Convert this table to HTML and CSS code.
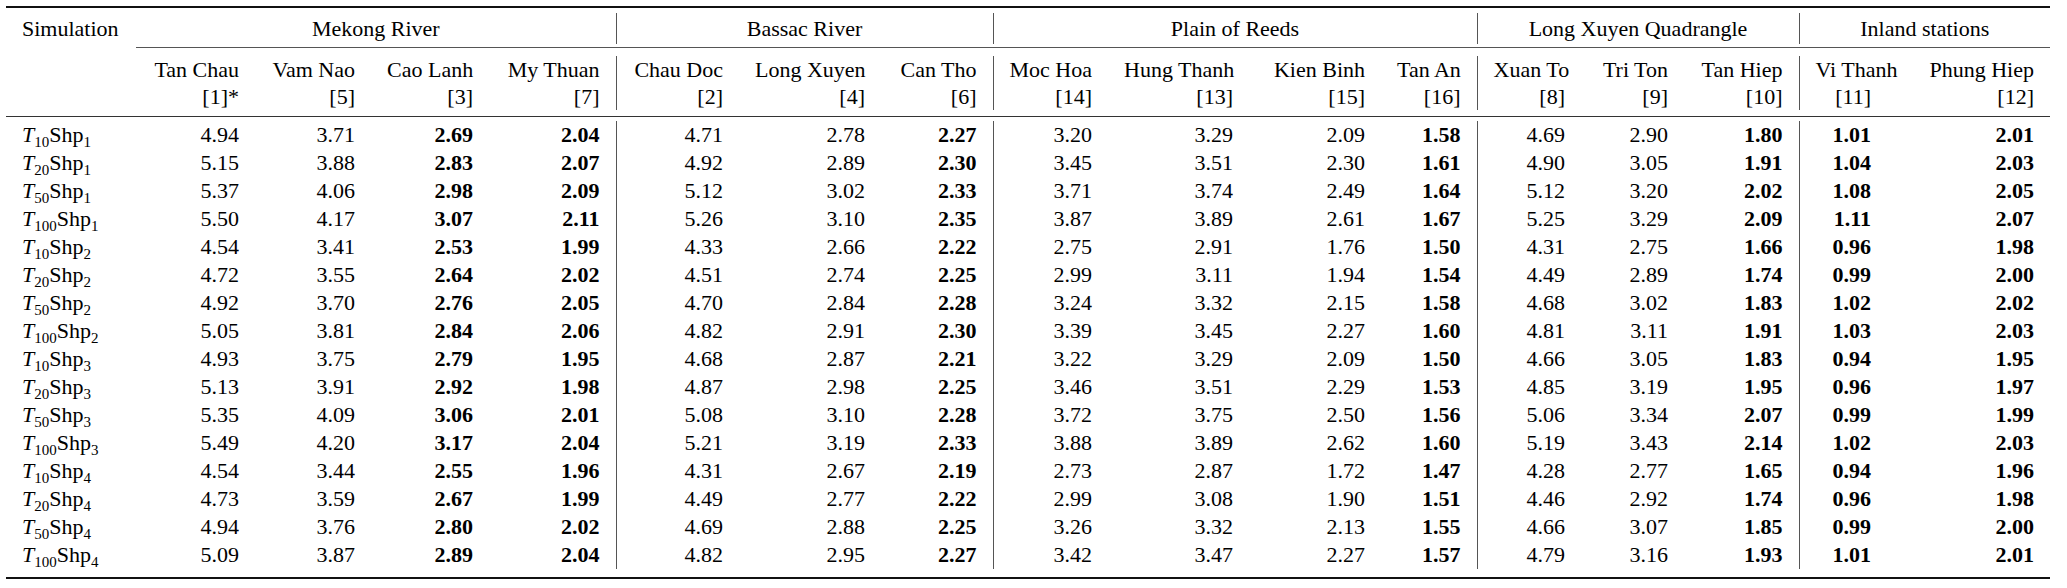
FILE: index.html
```html
<!DOCTYPE html>
<html lang="en">
<head>
<meta charset="utf-8">
<title>Simulation table</title>
<link rel="stylesheet" href="styles.css">
</head>
<body>
<table class="tbl">
  <colgroup>
    <col class="c-sim"><col class="c1"><col class="c2"><col class="c3"><col class="c4">
    <col class="c5"><col class="c6"><col class="c7">
    <col class="c8"><col class="c9"><col class="c10"><col class="c11">
    <col class="c12"><col class="c13"><col class="c14">
    <col class="c15"><col class="c16">
  </colgroup>
  <thead>
    <tr class="rule rule-top"><td colspan="17"></td></tr>
    <tr class="sp sp-a"><td colspan="17"></td></tr>
    <tr class="grp">
      <td class="sim-h">Simulation</td>
      <td colspan="4">Mekong River</td>
      <td colspan="3" class="s">Bassac River</td>
      <td colspan="4" class="s">Plain of Reeds</td>
      <td colspan="3" class="s">Long Xuyen Quadrangle</td>
      <td colspan="2" class="s">Inland stations</td>
    </tr>
    <tr class="sp sp-b"><td colspan="17"></td></tr>
    <tr class="cmid"><td></td><td colspan="16" class="line"></td></tr>
    <tr class="sp sp-c"><td colspan="17"></td></tr>
    <tr class="st">
      <td></td>
      <td>Tan Chau</td><td>Vam Nao</td><td>Cao Lanh</td><td>My Thuan</td>
      <td>Chau Doc</td><td>Long Xuyen</td><td>Can Tho</td>
      <td>Moc Hoa</td><td>Hung Thanh</td><td>Kien Binh</td><td>Tan An</td>
      <td>Xuan To</td><td>Tri Ton</td><td>Tan Hiep</td>
      <td>Vi Thanh</td><td>Phung Hiep</td>
    </tr>
    <tr class="st">
      <td></td>
      <td>[1]*</td><td>[5]</td><td>[3]</td><td>[7]</td>
      <td>[2]</td><td>[4]</td><td>[6]</td>
      <td>[14]</td><td>[13]</td><td>[15]</td><td>[16]</td>
      <td>[8]</td><td>[9]</td><td>[10]</td>
      <td>[11]</td><td>[12]</td>
    </tr>
    <tr class="sp sp-d"><td colspan="17"></td></tr>
    <tr class="rule rule-mid"><td colspan="17"></td></tr>
    <tr class="sp sp-e"><td colspan="17"></td></tr>
  </thead>
  <tbody>
    <tr><td><i>T</i><sub>10</sub>Shp<sub>1</sub></td><td>4.94</td><td>3.71</td><td>2.69</td><td>2.04</td><td>4.71</td><td>2.78</td><td>2.27</td><td>3.20</td><td>3.29</td><td>2.09</td><td>1.58</td><td>4.69</td><td>2.90</td><td>1.80</td><td>1.01</td><td>2.01</td></tr>
    <tr><td><i>T</i><sub>20</sub>Shp<sub>1</sub></td><td>5.15</td><td>3.88</td><td>2.83</td><td>2.07</td><td>4.92</td><td>2.89</td><td>2.30</td><td>3.45</td><td>3.51</td><td>2.30</td><td>1.61</td><td>4.90</td><td>3.05</td><td>1.91</td><td>1.04</td><td>2.03</td></tr>
    <tr><td><i>T</i><sub>50</sub>Shp<sub>1</sub></td><td>5.37</td><td>4.06</td><td>2.98</td><td>2.09</td><td>5.12</td><td>3.02</td><td>2.33</td><td>3.71</td><td>3.74</td><td>2.49</td><td>1.64</td><td>5.12</td><td>3.20</td><td>2.02</td><td>1.08</td><td>2.05</td></tr>
    <tr><td><i>T</i><sub>100</sub>Shp<sub>1</sub></td><td>5.50</td><td>4.17</td><td>3.07</td><td>2.11</td><td>5.26</td><td>3.10</td><td>2.35</td><td>3.87</td><td>3.89</td><td>2.61</td><td>1.67</td><td>5.25</td><td>3.29</td><td>2.09</td><td>1.11</td><td>2.07</td></tr>
    <tr><td><i>T</i><sub>10</sub>Shp<sub>2</sub></td><td>4.54</td><td>3.41</td><td>2.53</td><td>1.99</td><td>4.33</td><td>2.66</td><td>2.22</td><td>2.75</td><td>2.91</td><td>1.76</td><td>1.50</td><td>4.31</td><td>2.75</td><td>1.66</td><td>0.96</td><td>1.98</td></tr>
    <tr><td><i>T</i><sub>20</sub>Shp<sub>2</sub></td><td>4.72</td><td>3.55</td><td>2.64</td><td>2.02</td><td>4.51</td><td>2.74</td><td>2.25</td><td>2.99</td><td>3.11</td><td>1.94</td><td>1.54</td><td>4.49</td><td>2.89</td><td>1.74</td><td>0.99</td><td>2.00</td></tr>
    <tr><td><i>T</i><sub>50</sub>Shp<sub>2</sub></td><td>4.92</td><td>3.70</td><td>2.76</td><td>2.05</td><td>4.70</td><td>2.84</td><td>2.28</td><td>3.24</td><td>3.32</td><td>2.15</td><td>1.58</td><td>4.68</td><td>3.02</td><td>1.83</td><td>1.02</td><td>2.02</td></tr>
    <tr><td><i>T</i><sub>100</sub>Shp<sub>2</sub></td><td>5.05</td><td>3.81</td><td>2.84</td><td>2.06</td><td>4.82</td><td>2.91</td><td>2.30</td><td>3.39</td><td>3.45</td><td>2.27</td><td>1.60</td><td>4.81</td><td>3.11</td><td>1.91</td><td>1.03</td><td>2.03</td></tr>
    <tr><td><i>T</i><sub>10</sub>Shp<sub>3</sub></td><td>4.93</td><td>3.75</td><td>2.79</td><td>1.95</td><td>4.68</td><td>2.87</td><td>2.21</td><td>3.22</td><td>3.29</td><td>2.09</td><td>1.50</td><td>4.66</td><td>3.05</td><td>1.83</td><td>0.94</td><td>1.95</td></tr>
    <tr><td><i>T</i><sub>20</sub>Shp<sub>3</sub></td><td>5.13</td><td>3.91</td><td>2.92</td><td>1.98</td><td>4.87</td><td>2.98</td><td>2.25</td><td>3.46</td><td>3.51</td><td>2.29</td><td>1.53</td><td>4.85</td><td>3.19</td><td>1.95</td><td>0.96</td><td>1.97</td></tr>
    <tr><td><i>T</i><sub>50</sub>Shp<sub>3</sub></td><td>5.35</td><td>4.09</td><td>3.06</td><td>2.01</td><td>5.08</td><td>3.10</td><td>2.28</td><td>3.72</td><td>3.75</td><td>2.50</td><td>1.56</td><td>5.06</td><td>3.34</td><td>2.07</td><td>0.99</td><td>1.99</td></tr>
    <tr><td><i>T</i><sub>100</sub>Shp<sub>3</sub></td><td>5.49</td><td>4.20</td><td>3.17</td><td>2.04</td><td>5.21</td><td>3.19</td><td>2.33</td><td>3.88</td><td>3.89</td><td>2.62</td><td>1.60</td><td>5.19</td><td>3.43</td><td>2.14</td><td>1.02</td><td>2.03</td></tr>
    <tr><td><i>T</i><sub>10</sub>Shp<sub>4</sub></td><td>4.54</td><td>3.44</td><td>2.55</td><td>1.96</td><td>4.31</td><td>2.67</td><td>2.19</td><td>2.73</td><td>2.87</td><td>1.72</td><td>1.47</td><td>4.28</td><td>2.77</td><td>1.65</td><td>0.94</td><td>1.96</td></tr>
    <tr><td><i>T</i><sub>20</sub>Shp<sub>4</sub></td><td>4.73</td><td>3.59</td><td>2.67</td><td>1.99</td><td>4.49</td><td>2.77</td><td>2.22</td><td>2.99</td><td>3.08</td><td>1.90</td><td>1.51</td><td>4.46</td><td>2.92</td><td>1.74</td><td>0.96</td><td>1.98</td></tr>
    <tr><td><i>T</i><sub>50</sub>Shp<sub>4</sub></td><td>4.94</td><td>3.76</td><td>2.80</td><td>2.02</td><td>4.69</td><td>2.88</td><td>2.25</td><td>3.26</td><td>3.32</td><td>2.13</td><td>1.55</td><td>4.66</td><td>3.07</td><td>1.85</td><td>0.99</td><td>2.00</td></tr>
    <tr><td><i>T</i><sub>100</sub>Shp<sub>4</sub></td><td>5.09</td><td>3.87</td><td>2.89</td><td>2.04</td><td>4.82</td><td>2.95</td><td>2.27</td><td>3.42</td><td>3.47</td><td>2.27</td><td>1.57</td><td>4.79</td><td>3.16</td><td>1.93</td><td>1.01</td><td>2.01</td></tr>
  </tbody>
  <tfoot>
    <tr class="sp sp-f"><td colspan="17"></td></tr>
    <tr class="rule rule-bot"><td colspan="17"></td></tr>
  </tfoot>
</table>
</body>
</html>
```
FILE: styles.css
```css
html, body {
  margin: 0;
  padding: 0;
  background: #ffffff;
}

body {
  padding: 6px 0 0 6px;
  font-family: "Liberation Serif", "Times New Roman", serif;
  font-size: 22px;
  color: #000000;
}

.tbl {
  border-collapse: collapse;
  table-layout: fixed;
  width: 2044px;
}

.tbl td {
  padding: 0 16px;
  white-space: nowrap;
  text-align: right;
  line-height: 28px;
  height: 28px;
  vertical-align: middle;
}

/* column widths */
.c-sim { width: 130px; }
.c1 { width: 119px; }
.c2 { width: 116px; }
.c3 { width: 118px; }
.c4 { width: 127px; }
.c5 { width: 123px; }
.c6 { width: 142px; }
.c7 { width: 112px; }
.c8 { width: 115px; }
.c9 { width: 141px; }
.c10 { width: 132px; }
.c11 { width: 96px; }
.c12 { width: 104px; }
.c13 { width: 103px; }
.c14 { width: 115px; }
.c15 { width: 88px; }
.c16 { width: 163px; }

/* spacer rows and rules */
.tbl tr.sp td,
.tbl tr.rule td,
.tbl tr.cmid td {
  padding: 0;
  line-height: 0;
  font-size: 0;
}

.tbl tr.rule-top td { height: 0; border-top: 2px solid #111111; }
.tbl tr.rule-mid td { height: 0; border-top: 1.5px solid #333333; }
.tbl tr.rule-bot td { height: 0; border-top: 2px solid #111111; }
.tbl tr.cmid td { height: 0; }
.tbl tr.cmid td.line { border-top: 1px solid #555555; }

.tbl tr.sp-a td { height: 5px; }
.tbl tr.sp-b td { height: 3px; }
.tbl tr.sp-c td { height: 8px; }
.tbl tr.sp-d td { height: 6px; }
.tbl tr.sp-e td { height: 4px; }
.tbl tr.sp-f td { height: 8px; }

/* group header row */
.tbl tr.grp td {
  text-align: center;
  height: 31px;
  line-height: 31px;
}
.tbl tr.grp td.sim-h { text-align: left; }

.tbl td.s { border-left: 1px solid #555555; }

/* station header rows */
.tbl tr.st td {
  height: 27px;
  line-height: 27px;
}

.tbl tr.st td:nth-child(6),
.tbl tr.st td:nth-child(9),
.tbl tr.st td:nth-child(13),
.tbl tr.st td:nth-child(16) {
  border-left: 1px solid #555555;
}

/* body rows */
.tbl tbody td:first-child { text-align: left; }

.tbl tbody td:nth-child(6),
.tbl tbody td:nth-child(9),
.tbl tbody td:nth-child(13),
.tbl tbody td:nth-child(16) {
  border-left: 1px solid #555555;
}

.tbl tbody td:nth-child(4),
.tbl tbody td:nth-child(5),
.tbl tbody td:nth-child(8),
.tbl tbody td:nth-child(12),
.tbl tbody td:nth-child(15),
.tbl tbody td:nth-child(16),
.tbl tbody td:nth-child(17) {
  font-weight: bold;
}

.tbl sub {
  font-size: 15px;
  line-height: 0;
  vertical-align: -5px;
}

.tbl i {
  font-style: italic;
}
```
